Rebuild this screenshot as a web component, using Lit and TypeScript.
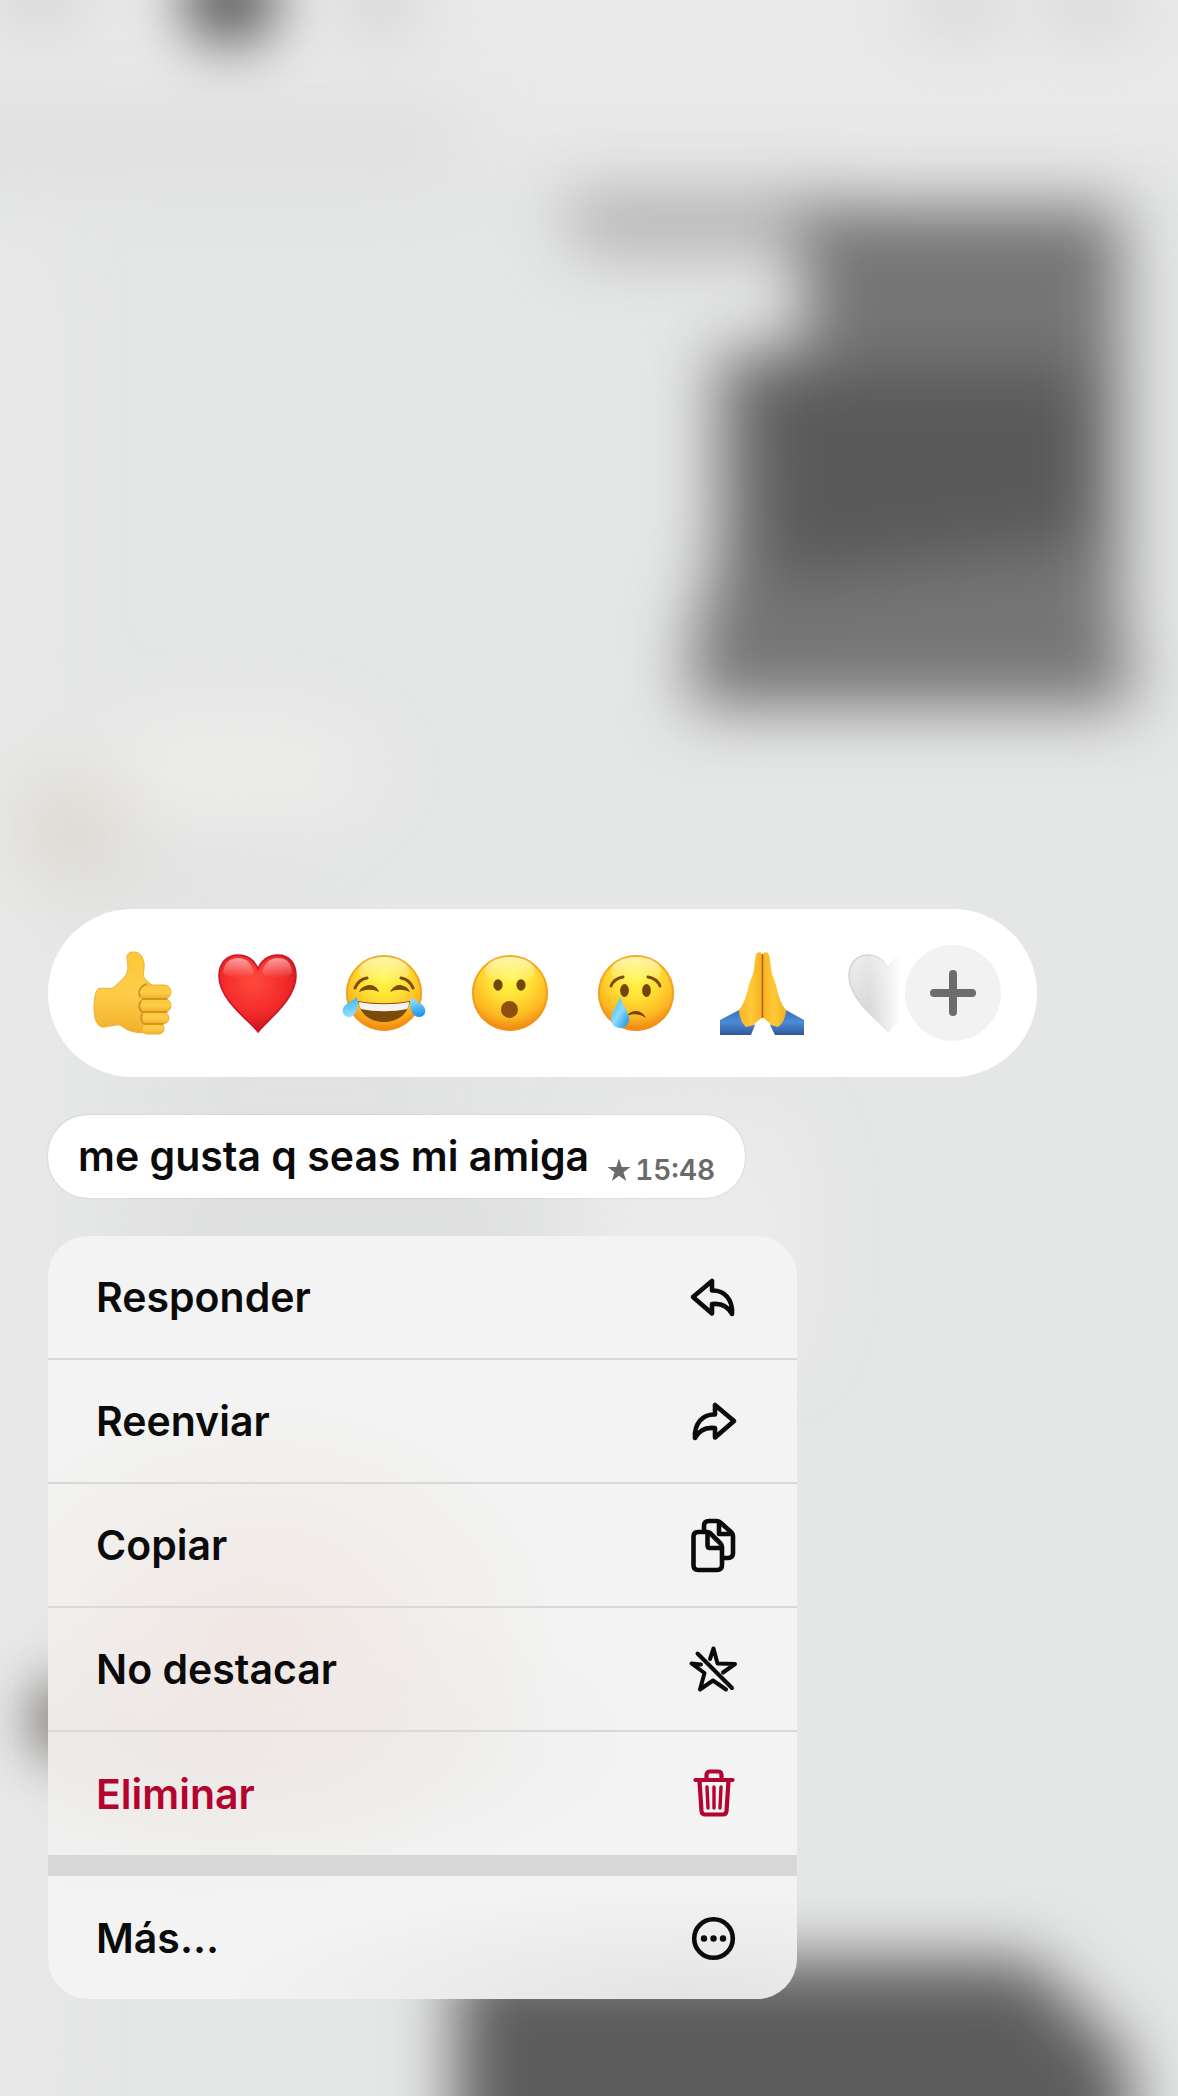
import { LitElement, html, css, svg } from "lit";
import { customElement } from "lit/decorators.js";
import { classMap } from "lit/directives/class-map.js";

const sharedPaints = svg`
  <defs>
    <radialGradient id="face" cx="50%" cy="28%" r="72%">
      <stop offset="0" stop-color="#fff84a"></stop>
      <stop offset=".4" stop-color="#ffe136"></stop>
      <stop offset=".75" stop-color="#fdb822"></stop>
      <stop offset="1" stop-color="#ee820f"></stop>
    </radialGradient>
    <linearGradient id="shine" x1="0" y1="0" x2="0" y2="1">
      <stop offset="0" stop-color="#fffce0" stop-opacity=".7"></stop>
      <stop offset="1" stop-color="#fffce0" stop-opacity="0"></stop>
    </linearGradient>
    <linearGradient id="tear" x1="0" y1="0" x2="1" y2="1">
      <stop offset="0" stop-color="#2fb0f5"></stop>
      <stop offset=".5" stop-color="#8edcff"></stop>
      <stop offset="1" stop-color="#0c8ce6"></stop>
    </linearGradient>
  </defs>`;

const face = svg`${sharedPaints}
  <circle cx="42" cy="42" r="38" fill="url(#face)"></circle>
  <circle cx="42" cy="42" r="37" fill="none" stroke="#ee951a" stroke-width="2" opacity=".7"></circle>
  <ellipse cx="42" cy="20" rx="25" ry="14" fill="url(#shine)"></ellipse>`;

const reactions = [
  {
    label: "Me gusta",
    art: svg`
      <defs>
        <linearGradient id="skin" x1="0" y1="0" x2="0" y2="1">
          <stop offset="0" stop-color="#fdc835"></stop>
          <stop offset=".5" stop-color="#fdcd49"></stop>
          <stop offset="1" stop-color="#f2b02b"></stop>
        </linearGradient>
      </defs>
      <path fill="url(#skin)" stroke="#eab038" stroke-width="1" d="M37 6C37 2 40 1 44 1C50 1 53 6 54 12C55 19 51 25 56 29L62 34L62 80C54 83 46 82 38 79C33 77 31 73 26 74L14 76C7 77 4 67 4 58C4 50 5 41 8 38C11 36 20 39 24 36C29 31 35 27 37 22C39 16 37 11 37 6Z"></path>
      <g fill="url(#skin)" stroke="#eab038" stroke-width="1">
        <rect x="52" y="72" width="22" height="11" rx="5"></rect>
        <rect x="50" y="61" width="29" height="12" rx="6"></rect>
        <rect x="49" y="48" width="32" height="13" rx="6"></rect>
        <rect x="49" y="34" width="32" height="14" rx="7"></rect>
      </g>
      <path fill="none" stroke="#c98a20" stroke-width="1.5" stroke-linecap="round" d="M56 33C50 36 48 41 50 46M52 48H77M51 50C49 53 49 57 51 60M52 61H77M52 63C51 67 51 70 53 72M54 73H73"></path>`,
  },
  {
    label: "Me encanta",
    art: svg`
      <defs>
        <radialGradient id="heart" cx="45%" cy="35%" r="70%">
          <stop offset="0" stop-color="#ff4a3e"></stop>
          <stop offset=".6" stop-color="#f22a29"></stop>
          <stop offset="1" stop-color="#c00f1e"></stop>
        </radialGradient>
        <linearGradient id="gloss" x1="0" y1="0" x2="0" y2="1">
          <stop offset="0" stop-color="#fff" stop-opacity=".55"></stop>
          <stop offset="1" stop-color="#fff" stop-opacity="0"></stop>
        </linearGradient>
      </defs>
      <path fill="url(#heart)" stroke="#c9182a" stroke-width="1.6" d="M42 81C34 70 3 49 3 25C3 12 11 4 22 4C32 4 39 10 42 18C45 10 52 4 62 4C73 4 80 12 80 25C80 49 50 70 42 81Z"></path>
      <path fill="url(#gloss)" d="M7 22C8 12 14 7 22 7C31 7 36 13 38 22C30 28 14 29 7 22Z"></path>
      <path fill="url(#gloss)" d="M46 22C48 13 53 7 62 7C71 7 76 13 76 22C70 29 53 28 46 22Z"></path>`,
  },
  {
    label: "Me divierte",
    art: svg`${face}
      <path fill="none" stroke="#7d4a08" stroke-width="3" stroke-linecap="round" d="M13 37C15 32 19 28 25 27M59 27C65 28 69 32 71 37"></path>
      <path fill="#7c4a06" d="M17 41C19 36 24 34 28 34C32 34 36 37 37 41C31 38 24 38 17 41ZM48 41C50 37 54 34 57 34C61 34 66 36 68 41C61 38 54 38 48 41Z"></path>
      <path fill="#7b4b0a" d="M16 50C32 53 52 53 68 50C66 63 56 71 42 71C28 71 18 63 16 50Z"></path>
      <path fill="#f6f3f1" d="M17 51C33 54 51 54 67 51C67 55 66 57 65 58C51 61 33 61 19 58C18 57 17 55 17 51Z"></path>
      <path fill="url(#tear)" d="M15 46C17 54 15 66 7 66C2 66 0 62 1 58C2 53 9 51 15 46ZM69 46C67 54 69 66 77 66C82 66 84 62 83 58C82 53 75 51 69 46Z"></path>`,
  },
  {
    label: "Me asombra",
    art: svg`${face}
      <g fill="#75440a">
        <ellipse cx="30" cy="34" rx="4.6" ry="5.8"></ellipse>
        <ellipse cx="53" cy="34" rx="4.6" ry="5.8"></ellipse>
        <circle cx="41.5" cy="58.5" r="8.5" fill="#8a500c"></circle>
      </g>`,
  },
  {
    label: "Me entristece",
    art: svg`${face}
      <g fill="#75440a">
        <ellipse cx="30.5" cy="39.5" rx="4.4" ry="6.4"></ellipse>
        <ellipse cx="52.5" cy="39.5" rx="4.4" ry="6.4"></ellipse>
      </g>
      <path fill="none" stroke="#7d4a08" stroke-width="3" stroke-linecap="round" d="M17 35C19 30 23 27 29 26M54 26C60 27 64 30 66 35"></path>
      <path fill="#75440a" d="M33 65C37 58 48 58 52 67C47 63 39 62 33 65Z"></path>
      <path fill="url(#tear)" d="M26 46C29 55 35 61 35 68C35 73 31 77 26 77C21 77 17 73 17 68C17 61 23 55 26 46Z"></path>`,
  },
  {
    label: "Gracias",
    art: svg`
      <defs>
        <linearGradient id="palm" x1="0" y1="0" x2="1" y2="0">
          <stop offset="0" stop-color="#f9b424"></stop>
          <stop offset=".5" stop-color="#ffc938"></stop>
          <stop offset="1" stop-color="#f4ae22"></stop>
        </linearGradient>
        <linearGradient id="sleeve" x1="0" y1="0" x2="0" y2="1">
          <stop offset="0" stop-color="#3f72b8"></stop>
          <stop offset=".5" stop-color="#4b8ad6"></stop>
          <stop offset="1" stop-color="#2f5899"></stop>
        </linearGradient>
      </defs>
      <path fill="url(#sleeve)" d="M0 69L19 59C23 65 28 72 35 74L31 84H0Z"></path>
      <path fill="url(#sleeve)" d="M84 69L66 59C62 65 57 72 50 74L55 84H84Z"></path>
      <path fill="url(#palm)" d="M42 4C42 1 37 0 36 4C34 10 35 20 31 28C28 34 27 50 19 59C19 65 22 73 26 76L34 74C36 71 40 68 42.500 66Z"></path>
      <path fill="url(#palm)" d="M43 4C43 1 48 0 49 4C51 10 50 20 54 28C57 34 58 50 66 59C66 65 63 73 58 76L51 74C49 71 45 68 42.500 66Z"></path>
      <path fill="none" stroke="#b4660d" stroke-width="1.6" d="M42.500 3V67"></path>`,
  },
  {
    label: "Corazón blanco",
    art: svg`
      <defs>
        <linearGradient id="pale" x1="0" y1="0" x2="1" y2="1">
          <stop offset="0" stop-color="#efefef"></stop>
          <stop offset=".5" stop-color="#d8d8d8"></stop>
          <stop offset="1" stop-color="#d2d2d2"></stop>
        </linearGradient>
      </defs>
      <path fill="url(#pale)" stroke="#d6d6d6" stroke-width="1.6" d="M42 81C34 70 3 49 3 25C3 12 11 4 22 4C32 4 39 10 42 18C45 10 52 4 62 4C73 4 80 12 80 25C80 49 50 70 42 81Z"></path>`,
  },
];

const arrow = svg`<path d="M8 28L27 12V21.500C39 21 48 30 47 45C43 37 37 34 27 35V44.500Z"></path>`;

const actions = [
  { label: "Responder", icon: arrow },
  { label: "Reenviar", icon: svg`<g transform="translate(57 0) scale(-1 1)">${arrow}</g>` },
  {
    label: "Copiar",
    icon: svg`
      <path d="M19 14V9Q19 4 24 4H32Q34 4 36 6L46 15Q48 17 48 19V36Q48 41 43 41H39"></path>
      <path d="M34 5V17H47"></path>
      <path d="M22 15H13Q8.500 15 8.500 20V48Q8.500 53 13 53H32Q37 53 37 48V30Q37 28 35 26L25 16Q24 15 22 15Z"></path>
      <path d="M22.500 15V28Q22.500 31 25 31H37"></path>`,
  },
  {
    label: "No destacar",
    icon: svg`
      <g stroke-width="4">
        <path d="M12.500 12.500L47 47"></path>
        <path d="M25 18L28.500 7.500L32.500 22.500L50 23L38 31.500"></path>
        <path d="M16 23.500L6.500 22.500L19.500 32L15 48.500L28 39.500L41 48.500"></path>
      </g>`,
  },
  {
    label: "Eliminar",
    danger: true,
    icon: svg`
      <g stroke-width="4.200">
        <path d="M10.500 14H47.500M21.500 13V9Q21.500 5.500 25 5.500H33Q36.500 5.500 36.500 9V13"></path>
        <path d="M14.500 15L16.500 45Q17 48.500 20 48.500H38Q41 48.500 41.500 45L43.500 15"></path>
        <path stroke-width="3.400" d="M22 21L23 42M29 21V42M36 21L35 42"></path>
      </g>`,
  },
  {
    label: "Más...",
    apart: true,
    icon: svg`
      <circle cx="28.500" cy="28.500" r="19.300"></circle>
      <g class="solid">
        <circle cx="19" cy="28.500" r="3.200"></circle>
        <circle cx="28.500" cy="28.500" r="3.200"></circle>
        <circle cx="38" cy="28.500" r="3.200"></circle>
      </g>`,
  },
];

/** Out-of-focus chat behind the message menu. */
@customElement("chat-backdrop")
class ChatBackdrop extends LitElement {
  static styles = css`
    :host {
      position: absolute;
      inset: 0;
      background: #e5e7e6;
    }
    .scene {
      display: block;
      width: 100%;
      height: 100%;
    }
  `;

  render() {
    return html`
      <svg class="scene" viewBox="0 0 1178 2096" preserveAspectRatio="none" aria-hidden="true">
        <defs>
          <filter id="soft" x="-50%" y="-50%" width="200%" height="200%" color-interpolation-filters="sRGB"><feGaussianBlur stdDeviation="28"></feGaussianBlur></filter>
          <filter id="deep" x="-50%" y="-50%" width="200%" height="200%" color-interpolation-filters="sRGB"><feGaussianBlur stdDeviation="32"></feGaussianBlur></filter>
          <filter id="wide" x="-80%" y="-80%" width="260%" height="260%" color-interpolation-filters="sRGB"><feGaussianBlur stdDeviation="42"></feGaussianBlur></filter>
        </defs>
        <g filter="url(#wide)">
          <rect x="-100" y="-100" width="1400" height="240" fill="#e9e9e9"></rect>
          <rect x="-80" y="115" width="540" height="40" fill="#d6d6d6"></rect>
          <rect x="-100" y="240" width="150" height="1900" fill="#e8e9e8"></rect>
          <ellipse cx="230" cy="770" rx="150" ry="50" fill="#eeedeb"></ellipse>
          <ellipse cx="70" cy="830" rx="50" ry="50" fill="#d9d2c8"></ellipse>
          <rect x="60" y="860" width="240" height="20" fill="#dadad9"></rect>
          <rect x="160" y="1085" width="300" height="16" fill="#cdcdcd"></rect>
          <rect x="150" y="1204" width="380" height="30" fill="#cfcfcf"></rect>
          <rect x="600" y="1120" width="200" height="240" fill="#ebebeb"></rect>
        </g>
        <g filter="url(#soft)">
          <ellipse cx="230" cy="0" rx="50" ry="46" fill="#5e5e5e"></ellipse>
          <ellipse cx="40" cy="0" rx="50" ry="26" fill="#d4d4d4"></ellipse>
          <ellipse cx="380" cy="5" rx="40" ry="26" fill="#d2d2d2"></ellipse>
          <ellipse cx="960" cy="8" rx="50" ry="26" fill="#d7d7d7"></ellipse>
          <ellipse cx="1090" cy="8" rx="50" ry="26" fill="#d7d7d7"></ellipse>
          <ellipse cx="64" cy="1720" rx="32" ry="40" fill="#6b6563"></ellipse>
        </g>
        <g filter="url(#deep)">
          <path fill="#aaa" d="M560 196H840V250H580Z"></path>
          <path fill="#757575" d="M800 206H1122V708H696V620L716 560V350H806Z"></path>
          <path fill="#595959" d="M760 370H1090V540L770 580Z"></path>
          <path fill="#767676" d="M690 650H1132V706H690Z"></path>
          <path fill="#5c5c5c" d="M456 1960H1030L1130 2060V2200H456Z"></path>
        </g>
      </svg>
    `;
  }
}

@customElement("reaction-bar")
class ReactionBar extends LitElement {
  static styles = css`
    :host {
      display: flex;
      align-items: center;
      box-sizing: border-box;
      width: 100%;
      max-width: 989px;
      padding: 36px 36px 36px 42px;
      border-radius: 84px;
      background: #fff;
    }
    .strip {
      display: flex;
      flex: 1;
      min-width: 0;
      gap: 42px;
      overflow: hidden;
      mask-image: linear-gradient(to left, transparent 4px, #000 36px);
    }
    button {
      flex: none;
      padding: 0;
      border: 0;
      background: none;
      font: inherit;
    }
    svg {
      display: block;
    }
    .reaction svg {
      width: 84px;
      height: 84px;
    }
    .more {
      border-radius: 50%;
      background: #f2f2f2;
    }
    .more svg {
      width: 96px;
      height: 96px;
      fill: none;
      stroke: #6c6d6d;
      stroke-width: 8;
      stroke-linecap: round;
    }
  `;

  render() {
    return html`
      <div class="strip">
        ${reactions.map(
          (r) => html`<button class="reaction" aria-label=${r.label}>
            <svg viewBox="0 0 84 84" aria-hidden="true">${r.art}</svg>
          </button>`,
        )}
      </div>
      <button class="more" aria-label="Más reacciones">
        <svg viewBox="0 0 96 96" aria-hidden="true"><path d="M48 29V67M29 48H67"></path></svg>
      </button>
    `;
  }
}

@customElement("message-menu")
class MessageMenu extends LitElement {
  static styles = css`
    :host {
      display: block;
      width: 100%;
      max-width: 749px;
      border-radius: 40px;
      overflow: hidden;
      background:
        radial-gradient(ellipse 300px 240px at 28% 53%, #f1e7e4, transparent),
        radial-gradient(ellipse 460px 110px at 85% 100%, #e4e4e4, transparent),
        radial-gradient(ellipse 440px 160px at 20% 66%, #eae9e8, transparent),
        #f2f3f2;
    }
    .row {
      display: flex;
      align-items: center;
      justify-content: space-between;
      box-sizing: border-box;
      width: 100%;
      height: 124px;
      padding: 0 56px 0 48px;
      border: 0;
      border-bottom: 2px solid #d9d9d9;
      background: none;
      color: #0b0b0b;
      font: 600 41px/52px Inter, "Liberation Sans", sans-serif;
      text-align: left;
    }
    .danger,
    .apart {
      height: 123px;
      border-bottom: 0;
    }
    .danger {
      color: #b5032f;
    }
    .gap {
      height: 21px;
      background: #d7d7d7;
    }
    svg {
      width: 56px;
      height: 56px;
      fill: none;
      stroke: currentColor;
      stroke-width: 4.600;
      stroke-linecap: round;
      stroke-linejoin: round;
    }
    .solid {
      fill: currentColor;
      stroke: none;
    }
  `;

  render() {
    return html`${actions.map(
      (a) => html`
        ${a.apart ? html`<div class="gap"></div>` : null}
        <button class=${classMap({ row: true, danger: !!a.danger, apart: !!a.apart })}>
          <span>${a.label}</span>
          <svg viewBox="0 0 56 56" aria-hidden="true">${a.icon}</svg>
        </button>
      `,
    )}`;
  }
}

@customElement("app-root")
class AppRoot extends LitElement {
  static styles = css`
    :host {
      display: block;
    }
    .page {
      position: relative;
      display: flex;
      flex-direction: column;
      align-items: flex-start;
      box-sizing: border-box;
      min-height: 100vh;
      padding: 909px 48px 96px;
      overflow: hidden;
      font-family: Inter, "Liberation Sans", sans-serif;
    }
    reaction-bar,
    message-menu,
    .bubble {
      position: relative;
    }
    .bubble {
      display: flex;
      align-items: flex-end;
      gap: 18px;
      margin: 38px 0;
      padding: 15px 30px;
      border-radius: 40px;
      background: #fff;
      box-shadow: 0 0 2px #00000030;
    }
    .text {
      margin: 0;
      color: #0b0b0b;
      font-weight: 600;
      font-size: 41px;
      line-height: 53px;
    }
    .meta {
      display: flex;
      align-items: center;
      gap: 4px;
      color: #6a6a6a;
      font-weight: 600;
      font-size: 28px;
      font-variant-numeric: tabular-nums;
      line-height: 26px;
    }
    .star {
      width: 24px;
      height: 24px;
      fill: currentColor;
    }
  `;

  render() {
    return html`
      <main class="page">
        <chat-backdrop></chat-backdrop>
        <reaction-bar></reaction-bar>
        <div class="bubble">
          <p class="text">me gusta q seas mi amiga</p>
          <div class="meta">
            <svg class="star" viewBox="0 0 24 24" aria-hidden="true">
              <path d="M12 0.500L14.700 9H23.500L16.500 14.300L19.200 23L12 17.700L4.800 23L7.500 14.300L0.500 9H9.300Z"></path>
            </svg>
            <time>15:48</time>
          </div>
        </div>
        <message-menu></message-menu>
      </main>
    `;
  }
}
